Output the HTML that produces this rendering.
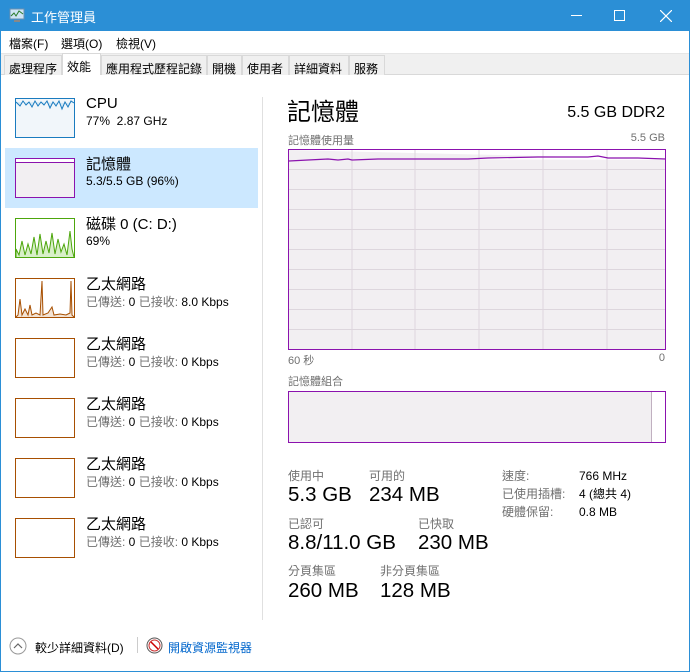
<!DOCTYPE html>
<html><head><meta charset="utf-8"><style>
*{margin:0;padding:0;box-sizing:border-box}
body{width:690px;height:672px;overflow:hidden;background:#fff;font-family:"Liberation Sans","Noto Sans CJK TC",sans-serif;position:relative;color:#000}
.a{position:absolute;white-space:nowrap}
.win{position:absolute;left:0;top:0;width:690px;height:672px;border:1px solid #2b8fd6}
.tb{position:absolute;left:0;top:0;width:690px;height:31px;background:#2b8fd6;color:#fff}
.g{color:#707070}
.th{position:absolute;left:15px;width:60px;height:40px;background:#fff}
.tt{font-size:15px}
.ts{font-size:12px}
.tab{position:absolute;top:55px;height:20px;font-size:12px;padding:4px 4px 0;border:1px solid #d9d9d9;border-bottom:none;background:#f0f0f0}
.big{font-size:20.5px}
</style></head><body>
<div class="win"></div>
<div class="tb">
 <svg class="a" style="left:9px;top:8px" width="16" height="15"><rect x="1" y="1" width="14" height="10" fill="#cfe4f4" stroke="#6a8fb0"/><polyline points="2,8 5,5 7,8 10,3 14,6" fill="none" stroke="#2a7a2a"/><rect x="5" y="12" width="6" height="2" fill="#888"/></svg>
 <div class="a" style="left:31px;top:7px;font-size:13px">工作管理員</div>
 <div class="a" style="left:571px;top:15px;width:11px;height:1px;background:#fff"></div>
 <div class="a" style="left:614px;top:10px;width:11px;height:11px;border:1px solid #fff"></div>
 <svg class="a" style="left:660px;top:10px" width="12" height="12"><path d="M0 0L12 12M12 0L0 12" stroke="#fff" stroke-width="1.2"/></svg>
</div>
<div class="a" style="left:9px;top:35px;font-size:12px">檔案(F)</div>
<div class="a" style="left:61px;top:35px;font-size:12px">選項(O)</div>
<div class="a" style="left:116px;top:35px;font-size:12px">檢視(V)</div>
<div class="a" style="left:1px;top:53px;width:688px;height:22px;background:#f0f0f0;border-top:1px solid #e6e6e6"></div>
<div class="a" style="left:1px;top:74px;width:688px;height:1px;background:#d9d9d9"></div>
<div class="tab" style="left:4px;width:58px">處理程序</div>
<div class="tab" style="left:62px;top:53px;height:22px;width:39px;background:#fff;padding-top:4px">效能</div>
<div class="tab" style="left:101px;width:106px">應用程式歷程記錄</div>
<div class="tab" style="left:207px;width:35px">開機</div>
<div class="tab" style="left:242px;width:47px">使用者</div>
<div class="tab" style="left:289px;width:60px">詳細資料</div>
<div class="tab" style="left:349px;width:36px">服務</div>

<div class="a" style="left:5px;top:148px;width:253px;height:60px;background:#cce8ff"></div>
<div class="th" style="top:98px;border:1px solid #1a7bbf;background:#f1f6fa"><svg width="58" height="38"><polyline points="0,3 4,7 7,2 10,6 13,3 16,8 19,2 22,7 25,3 28,6 31,2 34,9 37,3 40,7 43,2 46,10 49,3 52,8 55,2 58,4" fill="#d6e9f6" stroke="#1a7bbf"/></svg></div>
<div class="a tt" style="left:86px;top:95px">CPU</div>
<div class="a ts" style="left:86px;top:114px">77%&nbsp; 2.87 GHz</div>
<div class="th" style="top:158px;border:1px solid #8b12ae;background:#f2eff2"><div style="position:absolute;left:0;top:0;width:58px;height:3px;background:#fff"></div><div style="position:absolute;left:0;top:3px;width:58px;height:1px;background:#8b12ae"></div></div>
<div class="a tt" style="left:86px;top:153px">記憶體</div>
<div class="a ts" style="left:86px;top:174px">5.3/5.5 GB (96%)</div>
<div class="th" style="top:218px;border:1px solid #4da60c"><svg width="58" height="38"><polyline points="0,38 0,30 3,36 6,22 9,36 12,25 15,35 18,18 21,36 24,15 27,35 30,22 33,34 36,14 39,35 42,20 45,33 48,25 51,36 54,12 56,30 58,38" fill="#d8efc8" stroke="#4da60c"/></svg></div>
<div class="a tt" style="left:86px;top:213px">磁碟 0 (C: D:)</div>
<div class="a ts" style="left:86px;top:234px">69%</div>
<div class="th" style="top:278px;border:1px solid #a74f01"><svg width="58" height="38"><polyline points="0,38 2,36 4,20 6,36 9,30 12,36 14,26 16,36 20,34 24,36 26,2 27,36 32,34 36,28 38,36 44,35 50,36 54,34 55,2 56,36 58,38" fill="#f3e3d4" stroke="#a74f01"/></svg></div>
<div class="a tt" style="left:86px;top:273px">乙太網路</div>
<div class="a ts" style="left:86px;top:293px"><span class="g">已傳送:</span> 0 <span class="g">已接收:</span> 8.0 Kbps</div>

<div class="th" style="top:338px;border:1px solid #a74f01"></div>
<div class="a tt" style="left:86px;top:333px">乙太網路</div>
<div class="a ts" style="left:86px;top:353px"><span class="g">已傳送:</span> 0 <span class="g">已接收:</span> 0 Kbps</div>
<div class="th" style="top:398px;border:1px solid #a74f01"></div>
<div class="a tt" style="left:86px;top:393px">乙太網路</div>
<div class="a ts" style="left:86px;top:413px"><span class="g">已傳送:</span> 0 <span class="g">已接收:</span> 0 Kbps</div>
<div class="th" style="top:458px;border:1px solid #a74f01"></div>
<div class="a tt" style="left:86px;top:453px">乙太網路</div>
<div class="a ts" style="left:86px;top:473px"><span class="g">已傳送:</span> 0 <span class="g">已接收:</span> 0 Kbps</div>
<div class="th" style="top:518px;border:1px solid #a74f01"></div>
<div class="a tt" style="left:86px;top:513px">乙太網路</div>
<div class="a ts" style="left:86px;top:533px"><span class="g">已傳送:</span> 0 <span class="g">已接收:</span> 0 Kbps</div>

<div class="a" style="left:262px;top:97px;width:1px;height:523px;background:#e0e0e0"></div>

<div class="a" style="left:287px;top:92px;font-size:24px">記憶體</div>
<div class="a" style="right:25px;top:104px;font-size:16px">5.5 GB DDR2</div>
<div class="a g" style="left:288px;top:132px;font-size:11px">記憶體使用量</div>
<div class="a g" style="right:25px;top:132px;font-size:11px">5.5 GB</div>
<svg class="a" style="left:288px;top:149px" width="378" height="201">
 <rect x="0" y="0" width="378" height="201" fill="#f2eff2"/>
 <path d="M1 1H377V11 L40 10 L60 11 L90 10 L180 10 L200 9 L300 8 L350 9 L377 10 Z" fill="#fff"/>
 <g stroke="#ddd6dd" stroke-width="1">
 <path d="M64 0V201M127 0V201M191 0V201M255 0V201M319 0V201"/>
 <path d="M0 20.5H378M0 40.5H378M0 60.5H378M0 80.5H378M0 100.5H378M0 120.5H378M0 140.5H378M0 160.5H378M0 180.5H378"/>
 </g>
 <polyline points="1,12 20,11 40,10 50,11 60,10 64,11 90,10 180,10 200,9 250,8 300,8 310,7 320,9 350,9 377,10" fill="none" stroke="#8b12ae" stroke-width="1.2"/>
 <rect x="0.5" y="0.5" width="377" height="200" fill="none" stroke="#8b12ae"/>
</svg>
<div class="a g" style="left:288px;top:352px;font-size:11px">60 秒</div>
<div class="a g" style="right:25px;top:352px;font-size:11px">0</div>
<div class="a g" style="left:288px;top:373px;font-size:11px">記憶體組合</div>
<div class="a" style="left:288px;top:391px;width:378px;height:52px;border:1px solid #8b12ae;background:#f2eff2"><div style="position:absolute;left:362px;top:0;width:14px;height:50px;background:#fff;border-left:1px solid #c0b0c0"></div></div>

<div class="a g" style="left:288px;top:467px;font-size:12px">使用中</div>
<div class="a g" style="left:369px;top:467px;font-size:12px">可用的</div>
<div class="a big" style="left:288px;top:483px">5.3 GB</div>
<div class="a big" style="left:369px;top:483px">234 MB</div>
<div class="a g" style="left:288px;top:515px;font-size:12px">已認可</div>
<div class="a g" style="left:418px;top:515px;font-size:12px">已快取</div>
<div class="a big" style="left:288px;top:531px">8.8/11.0 GB</div>
<div class="a big" style="left:418px;top:531px">230 MB</div>
<div class="a g" style="left:288px;top:562px;font-size:12px">分頁集區</div>
<div class="a g" style="left:380px;top:562px;font-size:12px">非分頁集區</div>
<div class="a big" style="left:288px;top:579px">260 MB</div>
<div class="a big" style="left:380px;top:579px">128 MB</div>
<div class="a g" style="left:502px;top:467px;font-size:12px;line-height:18px">速度:<br>已使用插槽:<br>硬體保留:</div>
<div class="a" style="left:579px;top:467px;font-size:12px;line-height:18px">766 MHz<br>4 (總共 4)<br>0.8 MB</div>

<svg class="a" style="left:9px;top:637px" width="18" height="18"><circle cx="9" cy="9" r="8" fill="none" stroke="#999"/><path d="M5 11L9 7L13 11" fill="none" stroke="#666" stroke-width="1.2"/></svg>
<div class="a" style="left:35px;top:639px;font-size:12px">較少詳細資料(D)</div>
<div class="a" style="left:137px;top:637px;width:1px;height:16px;background:#ccc"></div>
<svg class="a" style="left:146px;top:637px" width="17" height="17"><circle cx="8.5" cy="8.5" r="7.5" fill="#fff" stroke="#555"/><circle cx="8.5" cy="8.5" r="5.5" fill="none" stroke="#c33"/><path d="M5 5L12 12" stroke="#c00" stroke-width="1.5"/></svg>
<div class="a" style="left:168px;top:639px;font-size:12px;color:#0066cc">開啟資源監視器</div>
</body></html>
